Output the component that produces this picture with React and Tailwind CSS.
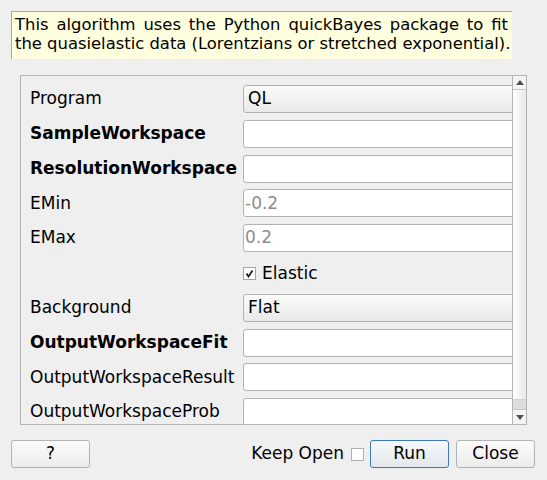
import React from "react";

const font = "font-['DejaVu_Sans','Liberation_Sans',sans-serif]";

function Combo({ text }) {
  return (
    <div className="h-[28px] w-[300px] shrink-0 rounded-[3px] border border-[#b2b2b2] bg-gradient-to-b from-[#fbfbfb] to-[#e9e9e9] flex items-center pl-[4px] text-[17px] text-black">
      {text}
    </div>
  );
}

function Input({ placeholder }) {
  return (
    <div className="h-[28px] w-[300px] shrink-0 rounded-[3px] border border-[#b2b2b2] bg-white flex items-center pl-[1px] text-[17px] text-[#8c8c8c]">
      {placeholder || ""}
    </div>
  );
}

function Row({ label, bold, children }) {
  return (
    <div className="flex items-center h-[28px] shrink-0">
      <div className={`w-[213px] shrink-0 whitespace-nowrap text-[17px] text-black ${bold ? "font-bold" : ""}`}>
        {label}
      </div>
      {children}
    </div>
  );
}

function Btn({ children, primary, className = "" }) {
  return (
    <div
      className={`h-[28px] w-[79px] rounded-[3px] border flex items-center justify-center text-[17px] text-black ${
        primary
          ? "border-[#3d7ab4] bg-gradient-to-b from-[#f7f9fb] to-[#e2e7ed]"
          : "border-[#b2b2b2] bg-gradient-to-b from-[#fbfbfb] to-[#ececec]"
      } ${className}`}
    >
      {children}
    </div>
  );
}

export default function App() {
  return (
    <div className={`w-[547px] h-[480px] bg-[#efefef] overflow-hidden ${font} text-black`}>
      <div className="pt-[11px] pl-[11px]">
        <div className="w-[501px] h-[48px] border-l border-t border-[#a8a8a8] bg-[#ffffdf] pl-[3px] pr-[4px] pt-[3px] text-[16.4px] leading-[19px]">
          <div className="whitespace-nowrap text-justify [text-align-last:justify]">
            This algorithm uses the Python quickBayes package to fit
          </div>
          <div className="whitespace-nowrap">
            the quasielastic data (Lorentzians or stretched exponential).
          </div>
        </div>
      </div>

      <div className="mt-[16px] ml-[20px] w-[507px] h-[350px] border border-[#b4b4b4] flex">
        <div className="flex-1 overflow-hidden pl-[9px] pt-[9px] flex flex-col gap-[6.8px]">
          <Row label="Program">
            <Combo text="QL" />
          </Row>
          <Row label="SampleWorkspace" bold>
            <Input />
          </Row>
          <Row label="ResolutionWorkspace" bold>
            <Input />
          </Row>
          <Row label="EMin">
            <Input placeholder="-0.2" />
          </Row>
          <Row label="EMax">
            <Input placeholder="0.2" />
          </Row>
          <Row label="">
            <div className="flex items-center pt-[2px]">
              <div className="w-[13px] h-[13px] border border-[#a4a4a4] bg-white flex items-center justify-center">
                <svg width="9" height="9" viewBox="0 0 9 9">
                  <path d="M1.5 4.5 L3.5 7.5 L7.5 1.5" fill="none" stroke="#111" strokeWidth="1.6" />
                </svg>
              </div>
              <span className="ml-[6px] text-[17px]">Elastic</span>
            </div>
          </Row>
          <Row label="Background">
            <Combo text="Flat" />
          </Row>
          <Row label="OutputWorkspaceFit" bold>
            <Input />
          </Row>
          <Row label="OutputWorkspaceResult">
            <Input />
          </Row>
          <Row label="OutputWorkspaceProb">
            <Input />
          </Row>
        </div>
        <div className="w-[14px] shrink-0 border-l border-[#b4b4b4] flex flex-col bg-[#f2f2f2]">
          <div className="h-[14px] border-b border-[#c4c4c4] flex items-center justify-center bg-[#f4f4f4]">
            <svg width="8" height="5" viewBox="0 0 8 5">
              <path d="M0 5 L4 0 L8 5 Z" fill="#505050" />
            </svg>
          </div>
          <div className="h-[310px] bg-gradient-to-r from-[#ffffff] to-[#e9e9e9] border-b border-[#cfcfcf]"></div>
          <div className="flex-1 bg-[#dedede]"></div>
          <div className="h-[15px] border-t border-[#c4c4c4] flex items-center justify-center bg-[#f4f4f4]">
            <svg width="8" height="5" viewBox="0 0 8 5">
              <path d="M0 0 L8 0 L4 5 Z" fill="#505050" />
            </svg>
          </div>
        </div>
      </div>

      <div className="mt-[15px] pl-[11px] pr-[12px] flex items-center h-[28px]">
        <Btn>?</Btn>
        <div className="flex-1" />
        <span className="text-[17px]">Keep Open</span>
        <div className="ml-[7px] w-[13px] h-[13px] border border-[#b0b0b0] bg-white" />
        <Btn primary className="ml-[6px]">Run</Btn>
        <Btn className="ml-[7px]">Close</Btn>
      </div>
    </div>
  );
}
